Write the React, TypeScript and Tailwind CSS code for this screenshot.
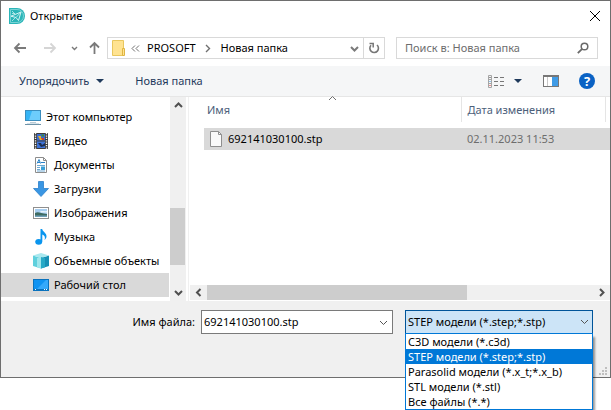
import React, { useState } from 'react';

const FILTERS = [
    'C3D модели (*.c3d)',
    'STEP модели (*.step;*.stp)',
    'Parasolid модели (*.x_t;*.x_b)',
    'STL модели (*.stl)',
    'Все файлы (*.*)',
];

interface ChevronProps {
    direction: 'up' | 'down' | 'left' | 'right';
    className?: string;
}

const CHEVRON_PATHS = {
    up: 'M2 7 L5.5 3.5 L9 7',
    down: 'M2 4 L5.5 7.5 L9 4',
    left: 'M7.5 2 L4 5.5 L7.5 9',
    right: 'M4 2 L7.5 5.5 L4 9',
};

function Chevron({ direction, className = '' }: ChevronProps) {
    return (
        <svg viewBox="0 0 11 11" className={`h-[11px] w-[11px] shrink-0 fill-none stroke-current ${className}`}>
            <path d={CHEVRON_PATHS[direction]} />
        </svg>
    );
}

function AppLogo() {
    return (
        <svg viewBox="0 0 16 16" className="h-4 w-4 shrink-0">
            <path d="M0 0h8a8 8 0 0 1 0 16H0z" fill="#2bb5b8" />
            <path d="M1.5 1.5H8a6.5 6.5 0 0 1 0 13H1.5z" fill="none" stroke="#8edbdc" strokeWidth="0.8" />
            <path d="M2 8.2 12 4 9.5 12.5 7 9.5z" fill="#2bb5b8" stroke="#e8fafa" strokeWidth="0.9" />
            <path d="M7 9.5 12 4M3 3l3 3M3 13l3-3M3 5.5h3" fill="none" stroke="#c4eeee" strokeWidth="0.8" />
        </svg>
    );
}

function ComputerIcon() {
    return (
        <svg viewBox="0 0 16 16" className="h-4 w-4 shrink-0">
            <rect x="0.5" y="1.5" width="15" height="10" fill="#35b4f5" stroke="#3b8dbd" />
            <path d="M7 2h8v9H4z" fill="#6dccfb" />
            <path d="M5 13.5h6" stroke="#b9cbd6" />
            <path d="M2 14.5h12" stroke="#d5e2ea" />
            <path d="M0 15.5h16" stroke="#6f93a8" />
        </svg>
    );
}

function VideoIcon() {
    return (
        <svg viewBox="0 0 16 16" className="h-4 w-4 shrink-0">
            <rect x="1" y="0" width="14" height="16" fill="#3c3c3c" />
            <path d="M2.5 0v16M13.5 0v16" stroke="#f4f4f4" strokeWidth="1.4" strokeDasharray="1.3 1.1" />
            <rect x="4" y="1" width="8" height="6.5" fill="#3b6bd0" />
            <rect x="4" y="8.5" width="8" height="6.5" fill="#3f74d8" />
            <path d="M5 3h3v2h3v2H7z" fill="#e6b32a" />
            <path d="M8 1.5h3v2H9z" fill="#3f8b3a" />
            <path d="M5 10h3l1 2 3-2v3l-4 1z" fill="#1c2f52" />
            <path d="M8 5h3v2H9z" fill="#c9402b" />
        </svg>
    );
}

function DocumentsIcon() {
    return (
        <svg viewBox="0 0 16 16" className="h-4 w-4 shrink-0">
            <path d="M2.5 0.5h8l3 3v12h-11z" fill="#fff" stroke="#8c8c8c" />
            <path d="M10.5 0.5v3h3" fill="none" stroke="#8c8c8c" />
            <path d="M4 6.5 6 2.5l1.5 4M5 5.5h2M8 5.5h4" fill="none" stroke="#2a83c9" />
            <path d="M4 8.5h8M4 10.5h3M4 12.5h3M4 14h8" stroke="#5d9fce" strokeWidth="0.9" />
            <rect x="8" y="9.5" width="4" height="3.5" fill="#3ba0d8" />
        </svg>
    );
}

function DownloadsIcon() {
    return (
        <svg viewBox="0 0 16 16" className="h-4 w-4 shrink-0">
            <path d="M5.5 0.5h5v7h5L8 15.5.5 7.5h5z" fill="#3a96e3" stroke="#2b80cb" strokeWidth="0.8" />
        </svg>
    );
}

function PicturesIcon() {
    return (
        <svg viewBox="0 0 16 16" className="h-4 w-4 shrink-0">
            <rect x="0.5" y="2.5" width="15" height="11" fill="#fff" stroke="#8f8f8f" />
            <rect x="2" y="4" width="12" height="8" fill="#a6cdf0" />
            <path d="M2 8c3-2 5 0 12 1v3H2z" fill="#3e6b62" />
            <path d="M2 10.5h12V12H2z" fill="#6fa0ba" />
            <path d="M7 6.5c2-1 4 0 7-.5v1.5H8z" fill="#e6f2fc" />
        </svg>
    );
}

function MusicIcon() {
    return (
        <svg viewBox="0 0 16 16" className="h-4 w-4 shrink-0">
            <path d="M7.5 0h1.7c.3 2.500 4.300 4 4.300 7.200 0 1.600-.8 2.800-2 3.800.9-2.600.6-4.500-2.200-5.500V12.500H7.500z" fill="#0a95ee" />
            <ellipse cx="5.7" cy="12.8" rx="3.5" ry="2.9" fill="#0a95ee" />
        </svg>
    );
}

function ObjectsIcon() {
    return (
        <svg viewBox="0 0 16 16" className="h-4 w-4 shrink-0">
            <path d="M0 2.500 8 5v10.500L0 13z" fill="#5fd0dd" />
            <path d="M8 5l8-2.500V13l-8 2.500z" fill="#1790b5" />
            <path d="M0 2.500 8 0l8 2.500L8 5z" fill="#a9e8ef" />
            <path d="M4 5l4-1v11.500l-4-1.300z" fill="#9fe6ec" />
            <path d="M8 4l4 1v9.200l-4 1.300z" fill="#27a9c6" />
        </svg>
    );
}

function DesktopIcon() {
    return (
        <svg viewBox="0 0 16 16" className="h-4 w-4 shrink-0">
            <rect x="0.5" y="2.5" width="15" height="11" fill="#0f93f2" stroke="#0a72bd" />
            <path d="M13 3h2v9H4z" fill="#35a9fb" />
            <path d="M1 12.5h14" stroke="#0a72bd" />
            <path d="M2 12.5h1M11 12.5h1M13 12.5h1" stroke="#fff" />
        </svg>
    );
}

const PLACES = [
    { label: 'Видео', icon: <VideoIcon /> },
    { label: 'Документы', icon: <DocumentsIcon /> },
    { label: 'Загрузки', icon: <DownloadsIcon /> },
    { label: 'Изображения', icon: <PicturesIcon /> },
    { label: 'Музыка', icon: <MusicIcon /> },
    { label: 'Объемные объекты', icon: <ObjectsIcon /> },
    { label: 'Рабочий стол', icon: <DesktopIcon /> },
];

function TitleBar() {
    return (
        <header className="flex h-[30px] items-center gap-[5px] pl-2 pr-[9px]">
            <AppLogo />
            <h1 className="flex-1">Открытие</h1>
            <button aria-label="Закрыть" className="text-black">
                <svg viewBox="0 0 12 12" className="h-3 w-3 fill-none stroke-current">
                    <path d="M1 1l10 10M11 1L1 11" />
                </svg>
            </button>
        </header>
    );
}

function NavigationBar() {
    return (
        <nav className="flex h-[35px] items-center pb-px pl-3 pr-3">
            <div className="flex items-center text-[#7a7a7a]">
                <button aria-label="Назад">
                    <svg viewBox="0 0 14 12" className="h-3 w-[14px] fill-none stroke-current">
                        <path d="M13 6H2M6.5 1.5 2 6l4.500 4.500" strokeWidth="1.8" />
                    </svg>
                </button>
                <button aria-label="Вперед" className="ml-4 text-[#d5d5d5]">
                    <svg viewBox="0 0 14 12" className="h-3 w-[14px] fill-none stroke-current">
                        <path d="M1 6h11M7.5 1.5 12 6l-4.500 4.500" strokeWidth="1.8" />
                    </svg>
                </button>
                <button aria-label="Последние расположения" className="ml-3">
                    <svg viewBox="0 0 11 11" className="h-[11px] w-[11px] fill-none stroke-current">
                        <path d="M3 4l2.500 2.500L8 4" strokeWidth="1.4" />
                    </svg>
                </button>
                <button aria-label="Вверх" className="ml-2 mr-1.5">
                    <svg viewBox="0 0 13 14" className="h-[14px] w-[13px] fill-none stroke-current">
                        <path d="M6.5 13V2M2 6.5 6.5 2 11 6.5" strokeWidth="1.8" />
                    </svg>
                </button>
            </div>
            <div className="flex h-[22px] flex-1 border border-[#d9d9d9]">
                <div className="flex flex-1 items-center pl-1">
                    <svg viewBox="0 0 14 16" className="h-4 w-[14px] shrink-0">
                        <path d="M0.5 0.5h11v15h-11z" fill="#ffe391" stroke="#e9c75e" />
                        <path d="M10.5 8.5h2v7h-2z" fill="#ffe391" stroke="#dfb542" />
                    </svg>
                    <svg viewBox="0 0 9 9" className="ml-[5px] h-[9px] w-[9px] fill-none stroke-[#6f6f6f]">
                        <path d="M4 1.5l-3 3 3 3M8 1.5l-3 3 3 3" />
                    </svg>
                    <a href="#prosoft" className="ml-[7px]">PROSOFT</a>
                    <Chevron direction="right" className="ml-1.5 stroke-[1.4] text-[#6f6f6f]" />
                    <a href="#folder" className="ml-2 flex-1">Новая папка</a>
                    <button aria-label="Предыдущие расположения" className="mr-[3px] text-[#7a7a7a]">
                        <Chevron direction="down" className="stroke-2" />
                    </button>
                </div>
                <button aria-label="Обновить" className="flex w-[21px] items-center justify-center border-l border-[#d9d9d9] text-[#777]">
                    <svg viewBox="0 0 12 12" className="h-3 w-3 fill-none stroke-current">
                        <path d="M9 3A4.300 4.300 0 1 1 3 3.300" strokeWidth="1.6" />
                        <path d="M1.500 1.600H5.200V5.500" strokeWidth="1.5" />
                    </svg>
                </button>
            </div>
            <div className="ml-[11px] flex h-[22px] w-[202px] items-center border border-[#d9d9d9] pl-2 pr-2">
                <input
                    type="search"
                    aria-label="Поиск"
                    placeholder="Поиск в: Новая папка"
                    className="w-full min-w-0 outline-none placeholder:text-[#6d6d6d]"
                />
                <svg viewBox="0 0 12 12" className="h-3 w-3 shrink-0 fill-none stroke-[#6a6a6a]">
                    <circle cx="7.5" cy="4.5" r="3.3" strokeWidth="1.5" />
                    <path d="M5.200 6.800.8 11.200" strokeWidth="1.8" />
                </svg>
            </div>
        </nav>
    );
}

function Toolbar() {
    return (
        <div className="flex h-[31px] items-center border-b border-[#e6e6e6] bg-[#f5f6f7] pl-[18px] pr-[15px] text-[#1e395b]">
            <button className="flex items-center gap-[7px]">
                Упорядочить
                <svg viewBox="0 0 8 4" className="h-1 w-2 fill-current">
                    <path d="M0 0h8L4 4z" />
                </svg>
            </button>
            <button className="ml-[31px]">Новая папка</button>
            <button aria-label="Изменить представление" className="ml-auto flex items-center gap-2.5">
                <svg viewBox="0 0 16 13" className="h-[13px] w-4 fill-none">
                    <path d="M0.5 0.5h3v12h-3zM0.5 4.5h3M0.5 8.5h3" stroke="#a5a5a5" />
                    <path d="M6 2.5h4M12 2.5h4M6 6.5h4M12 6.5h4M6 10.5h4M12 10.5h4" stroke="#777" />
                    <path d="M1.5 2.5h1" stroke="#333" />
                    <path d="M1.5 6.5h1" stroke="#2a8fe0" />
                    <path d="M1.5 10.5h1" stroke="#d22" />
                </svg>
                <svg viewBox="0 0 8 4" className="h-1 w-2 fill-current">
                    <path d="M0 0h8L4 4z" />
                </svg>
            </button>
            <button aria-label="Область просмотра" className="ml-[21px]">
                <svg viewBox="0 0 16 12" className="h-3 w-4">
                    <rect x="0.5" y="0.5" width="15" height="11" fill="#fff" stroke="#777" />
                    <path d="M0 1h16" stroke="#777" strokeWidth="2" />
                    <path d="M4.5 2v9" stroke="#c8c8c8" />
                    <rect x="9" y="2" width="6" height="9" fill="#3f9be6" />
                </svg>
            </button>
            <button
                aria-label="Справка"
                className="ml-5 flex h-4 w-4 items-center justify-center rounded-full bg-[#0a62c4] text-[13px] font-bold text-white"
            >
                ?
            </button>
        </div>
    );
}

function Sidebar() {
    return (
        <div className="flex w-[188px] shrink-0 border-r border-[#f0f0f0]">
            <ul className="min-w-0 flex-1 pb-1 pt-2">
                <li>
                    <button className="flex h-6 w-full items-center gap-[5px] pl-6">
                        <ComputerIcon />
                        Этот компьютер
                    </button>
                </li>
                {PLACES.map((place) => (
                    <li key={place.label}>
                        <button
                            className={`flex h-6 w-full items-center gap-[5px] whitespace-nowrap pl-8 ${place.label === 'Рабочий стол' ? 'bg-[#d9d9d9]' : ''}`}
                        >
                            {place.icon}
                            {place.label}
                        </button>
                    </li>
                ))}
            </ul>
            <div className="ml-px mr-0.5 flex w-4 flex-col items-center bg-[#f0f0f0] text-[#505050]">
                <button aria-label="Прокрутить вверх" className="flex h-[17px] items-center">
                    <Chevron direction="up" className="stroke-2" />
                </button>
                <div className="flex flex-1 flex-col self-stretch pr-px">
                    <div className="grow-[94]" />
                    <div className="grow-[57] bg-[#cdcdcd]" />
                    <div className="grow-[19]" />
                </div>
                <button aria-label="Прокрутить вниз" className="flex h-[17px] items-center">
                    <Chevron direction="down" className="stroke-2" />
                </button>
            </div>
        </div>
    );
}

function FileList() {
    return (
        <div className="flex min-w-0 flex-1 flex-col pl-px">
            <table className="ml-3.5 table-fixed text-left">
                <colgroup>
                    <col />
                    <col className="w-36" />
                    <col className="w-[5px]" />
                </colgroup>
                <thead>
                    <tr className="h-[25px] text-[#4c607a]">
                        <th className="relative border-r border-[#e5e5e5] pl-[3px] font-normal">
                            Имя
                            <span className="absolute inset-x-0 -top-1 flex justify-center text-[#6f6f6f]">
                                <Chevron direction="up" />
                            </span>
                        </th>
                        <th className="border-r border-[#e5e5e5] pl-1.5 font-normal">Дата изменения</th>
                        <th aria-hidden="true" />
                    </tr>
                </thead>
                <tbody>
                    <tr className="h-1.5" aria-hidden="true">
                        <td colSpan={3} />
                    </tr>
                    <tr className="h-[22px] bg-[#d9d9d9]">
                        <td className="pl-1.5">
                            <div className="flex items-center gap-1.5">
                                <svg viewBox="0 0 12 16" className="h-4 w-3 shrink-0">
                                    <path d="M0.5 0.5h8l3 3v12h-11z" fill="#fafafa" stroke="#8f8f8f" />
                                    <path d="M8.5 0.5v3h3" fill="none" stroke="#8f8f8f" />
                                </svg>
                                692141030100.stp
                            </div>
                        </td>
                        <td className="pl-1.5 text-[#6d6d6d]">02.11.2023 11:53</td>
                        <td />
                    </tr>
                </tbody>
            </table>
            <div className="mb-px mt-auto flex h-[15px] items-center bg-[#f0f0f0] text-[#505050]">
                <button aria-label="Прокрутить влево" className="flex w-[17px] justify-center">
                    <Chevron direction="left" className="stroke-2" />
                </button>
                <div className="flex flex-1 self-stretch">
                    <div className="grow-[260] bg-[#cdcdcd]" />
                    <div className="grow-[126]" />
                </div>
                <button aria-label="Прокрутить вправо" className="flex w-[17px] justify-center">
                    <Chevron direction="right" className="stroke-2" />
                </button>
            </div>
        </div>
    );
}

function Footer() {
    const [fileName, setFileName] = useState('692141030100.stp');
    const [filter, setFilter] = useState(FILTERS[1]);

    return (
        <footer className="relative flex items-start bg-[#f0f0f0] pb-[43px] pl-4 pr-[17px] pt-[9px]">
            <label htmlFor="file-name" className="flex-1 pt-1 text-right">
                Имя файла:
            </label>
            <div className="ml-1.5 flex h-6 w-[192px] items-center border border-[#7a7a7a] bg-white pr-[3px]">
                <input
                    id="file-name"
                    value={fileName}
                    onChange={(e) => setFileName(e.target.value)}
                    className="w-full min-w-0 pl-0.5 outline-none"
                />
                <Chevron direction="down" className="text-[#555]" />
            </div>
            <div className="relative ml-3 w-[188px]">
                <select
                    aria-label="Тип файлов"
                    value={filter}
                    onChange={(e) => setFilter(e.target.value)}
                    className="block h-6 w-full appearance-none border border-[#005499] bg-[#cce4f7] pl-0.5 outline-none"
                >
                    {FILTERS.map((item) => (
                        <option key={item}>{item}</option>
                    ))}
                </select>
                <Chevron direction="down" className="pointer-events-none absolute right-[3px] top-1.5 text-[#555]" />
                <ul className="absolute left-0 top-[23px] z-10 w-full border border-[#0078d7] bg-white shadow-[3px_3px_2px_-1px_rgba(0,0,0,0.4)]">
                    {FILTERS.map((item) => (
                        <li key={item}>
                            <button
                                onClick={() => setFilter(item)}
                                className={`block h-[15px] w-full whitespace-nowrap pl-0.5 text-left leading-[15px] ${item === filter ? 'bg-[#0078d7] text-white' : ''}`}
                            >
                                {item}
                            </button>
                        </li>
                    ))}
                </ul>
            </div>
            <svg viewBox="0 0 8 8" className="absolute bottom-0.5 right-[3px] h-2 w-2 fill-[#bfbfbf]">
                <path d="M6 0h2v2H6zM3 3h2v2H3zM6 3h2v2H6zM0 6h2v2H0zM3 6h2v2H3zM6 6h2v2H6z" />
            </svg>
        </footer>
    );
}

export default function App() {
    return (
        <div className="min-h-screen bg-white pb-8 font-['Noto_Sans','Open_Sans',sans-serif] text-[11px] leading-4 text-black">
            <div className="border border-[#6e6e6e]">
                <TitleBar />
                <NavigationBar />
                <Toolbar />
                <main className="flex">
                    <Sidebar />
                    <FileList />
                </main>
                <Footer />
            </div>
        </div>
    );
}
